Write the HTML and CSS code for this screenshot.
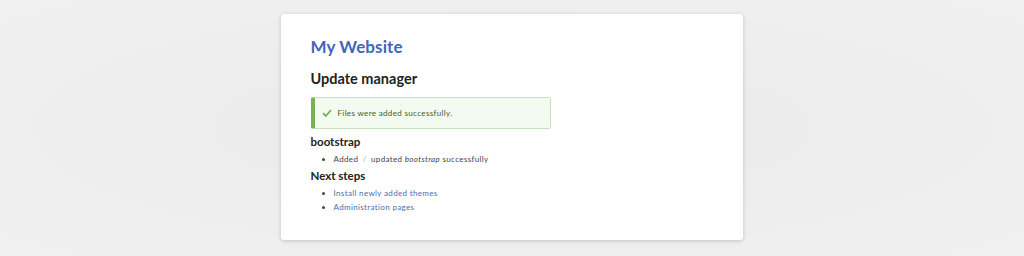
FILE: index.html
```html
<!DOCTYPE html>
<html lang="en">
<head>
  <meta charset="UTF-8">
  <title>Update manager | My Website</title>
  <link rel="stylesheet" href="styles.css">
</head>
<body>
  <div class="page">
    <main class="card">
      <h1 class="site-name">My Website</h1>
      <h2 class="page-title">Update manager</h2>

      <div class="messages status">
        <svg class="check" width="10" height="8" viewBox="0 0 10 8">
          <path d="M1 4.2 L3.8 7 L9 1" fill="none" stroke="#77b259" stroke-width="1.8"/>
        </svg>
        Files were added successfully.
      </div>

      <h3>bootstrap</h3>
      <ul>
        <li>Added <span class="sep">/</span> updated <em>bootstrap</em> successfully</li>
      </ul>

      <h3 class="next">Next steps</h3>
      <ul>
        <li><a href="#">Install newly added themes</a></li>
        <li><a href="#">Administration pages</a></li>
      </ul>
    </main>
  </div>
</body>
</html>
```

FILE: styles.css
```css
html, body {
  margin: 0;
  padding: 0;
  height: 100%;
}

body {
  background: radial-gradient(ellipse at center, #e9e9e9 0%, #eeeeee 60%, #f0f0f0 100%);
  font-family: Lato, "DejaVu Sans", sans-serif;
  color: #333;
}

.page {
  display: flex;
  justify-content: center;
  padding-top: 14px;
}

.card {
  box-sizing: border-box;
  width: 462px;
  min-height: 226px;
  margin-left: -1px;
  padding: 22px 30px 20px;
  background: #fff;
  border-radius: 3px;
  box-shadow: 0 1px 4px rgba(0, 0, 0, 0.18);
}

.site-name {
  margin: 0;
  font-size: 17px;
  line-height: 22px;
  font-weight: bold;
  color: #4266b8;
  letter-spacing: 0.1px;
}

.page-title {
  margin: 11px 0 0;
  font-size: 14.5px;
  line-height: 20px;
  font-weight: bold;
  color: #222;
}

.messages {
  display: flex;
  align-items: center;
  gap: 6px;
  box-sizing: border-box;
  width: 240px;
  height: 32px;
  margin-top: 8px;
  padding-left: 7px;
  font-size: 8px;
  letter-spacing: 0.35px;
  color: #3d5e2c;
  background: #f3faef;
  border: 1px solid #c9e1bd;
  border-left: 4px solid #77b259;
  border-radius: 2px;
}

.check {
  flex: none;
}

h3 {
  margin: 5px 0 0;
  font-size: 11.5px;
  line-height: 16px;
  font-weight: bold;
  color: #222;
}

h3.next {
  margin-top: 2px;
}

ul {
  margin: 2px 0 0;
  padding-left: 23px;
  font-size: 8px;
  line-height: 14px;
  letter-spacing: 0.35px;
}

li {
  color: #444;
}

.sep {
  color: #aaa;
  margin: 0 2px;
}

a {
  color: #4a6cb8;
  text-decoration: none;
}
```
